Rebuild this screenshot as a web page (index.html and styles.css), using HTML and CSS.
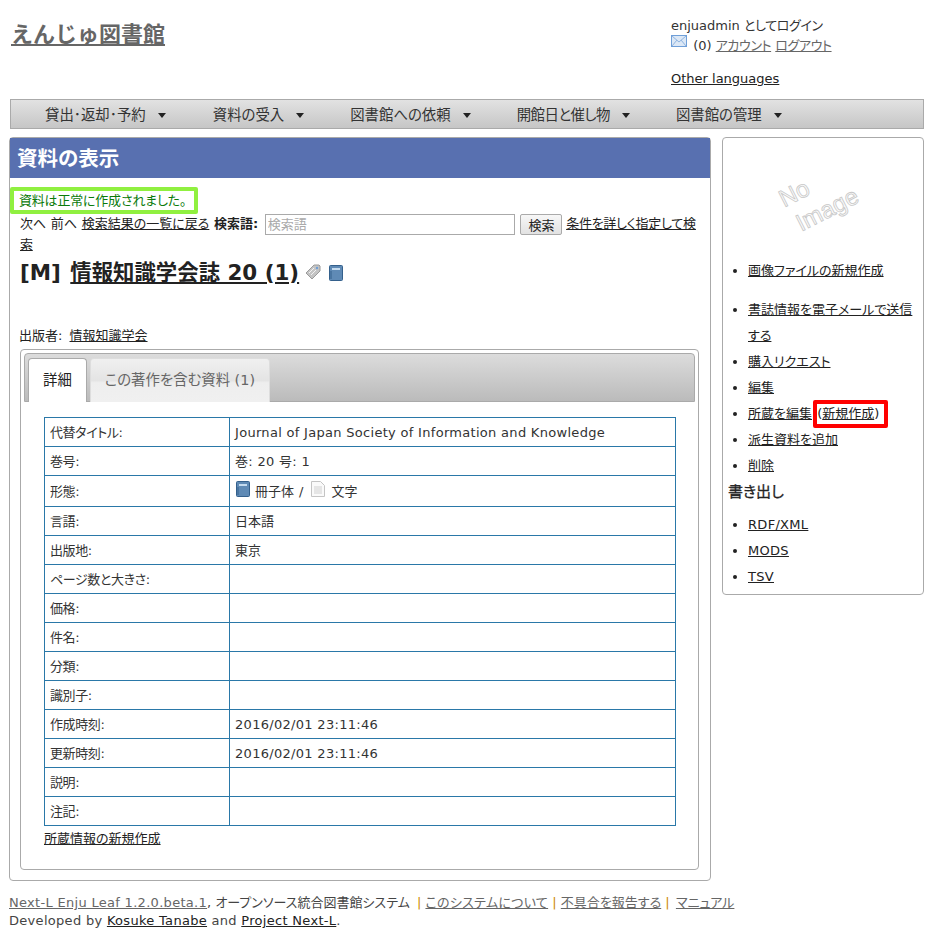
FILE: index.html
```html
<!doctype html>
<html lang="ja">
<head>
<meta charset="utf-8" />
<meta name="viewport" content="width=device-width,initial-scale=1" />
<title>資料の表示 - えんじゅ図書館</title>
<link rel="stylesheet" href="styles.css">
</head>
<body>

<div class="header">
  <h1 class="logo"><a href="#">えんじゅ図書館</a></h1>
  <div class="login">
    <div>enjuadmin <span class="tight">としてログイン</span></div>
    <div class="login-links">
      <svg class="mail" width="16" height="12" viewBox="0 0 16 12"><rect x=".5" y=".5" width="15" height="11" fill="#dce8f6" stroke="#6f9fd8"/><path d="M1 1l7 6 7-6M1 11l5-6M15 11l-5-6" fill="none" stroke="#8fb4e0"/></svg>
      <span>(0)</span> <a class="grey tight" href="#">アカウント</a> <a class="grey tight" href="#">ログアウト</a>
    </div>
    <div class="other"><a href="#">Other languages</a></div>
  </div>
</div>

<ul class="nav">
  <li>貸出･返却･予約<i class="caret"></i></li>
  <li>資料の受入<i class="caret"></i></li>
  <li>図書館への依頼<i class="caret"></i></li>
  <li class="narrow">開館日と催し物<i class="caret"></i></li>
  <li>図書館の管理<i class="caret"></i></li>
</ul>

<div class="columns">
  <div class="main card">
    <h2 class="page-title">資料の表示</h2>
    <div class="content">
      <div class="notice">資料は正常に作成されました。</div>
      <div class="search-line">
        次へ 前へ <a href="#">検索結果の一覧に戻る</a> <b>検索語:</b>
        <input class="query" placeholder="検索語">
        <button class="go">検索</button>
        <a class="adv" href="#">条件を詳しく指定して検索</a>
      </div>
      <div class="title-line">
        <span class="title-text">[M] <a href="#">情報知識学会誌 20 (1)</a></span>
        <svg class="tag" width="16" height="16" viewBox="0 0 16 16"><path d="M1 9l8-8h5l1 1v5l-8 8z" fill="#c4c4c4" stroke="#9a9a9a"/><path d="M4 9l5-5M6 11l5-5" stroke="#f2f2f2"/><circle cx="12" cy="4" r="1.2" fill="#6f9fd8"/></svg>
        <svg class="book after-tag" width="14" height="16" viewBox="0 0 14 16"><rect x=".5" y=".5" width="13" height="15" rx="1" fill="#5f8ab5" stroke="#34608c"/><rect x="3" y="3" width="8" height="2" fill="#c4dbef"/><path d="M2 6v8" stroke="#34608c"/></svg>
      </div>
      <div class="publisher">出版者: <a href="#">情報知識学会</a></div>

      <div class="panel">
        <div class="tabs">
          <a class="tab active" href="#">詳細</a>
          <a class="tab" href="#">この著作を含む資料 (1)</a>
        </div>
        <table class="info">
          <tr><td>代替タイトル:</td><td class="wide">Journal of Japan Society of Information and Knowledge</td></tr>
          <tr><td>巻号:</td><td class="wide">巻: 20 号: 1</td></tr>
          <tr class="form-row"><td>形態:</td><td>
            <div class="form-cell">
              <svg class="book" width="14" height="16" viewBox="0 0 14 16"><rect x=".5" y=".5" width="13" height="15" rx="1" fill="#5f8ab5" stroke="#34608c"/><rect x="3" y="3" width="8" height="2" fill="#c4dbef"/><path d="M2 6v8" stroke="#34608c"/></svg>
              <span>冊子体</span><span>/</span>
              <svg class="book doc" width="14" height="16" viewBox="0 0 14 16"><path d="M.5.5h9l4 4v11H.5z" fill="#fafafa" stroke="#c4c4c4"/><path d="M3 6h8M3 8h8M3 10h8M3 12h8" stroke="#d0d0d0"/></svg>
              <span>文字</span>
            </div></td></tr>
          <tr><td>言語:</td><td>日本語</td></tr>
          <tr><td>出版地:</td><td>東京</td></tr>
          <tr><td>ページ数と大きさ:</td><td></td></tr>
          <tr><td>価格:</td><td></td></tr>
          <tr><td>件名:</td><td></td></tr>
          <tr><td>分類:</td><td></td></tr>
          <tr><td>識別子:</td><td></td></tr>
          <tr><td>作成時刻:</td><td class="wide">2016/02/01 23:11:46</td></tr>
          <tr><td>更新時刻:</td><td class="wide">2016/02/01 23:11:46</td></tr>
          <tr><td>説明:</td><td></td></tr>
          <tr><td>注記:</td><td></td></tr>
        </table>
        <div class="new-item"><a href="#">所蔵情報の新規作成</a></div>
      </div>
    </div>
  </div>

  <div class="side card">
    <svg class="noimage" width="190" height="107" viewBox="0 0 190 107">
      <text x="67" y="57" transform="rotate(-27 67 57)" text-anchor="middle" dominant-baseline="middle">No</text>
      <text x="100" y="73" transform="rotate(-27 100 73)" text-anchor="middle" dominant-baseline="middle">Image</text>
    </svg>
    <ul class="first-list">
      <li><a href="#">画像ファイルの新規作成</a></li>
    </ul>
    <ul>
      <li><a href="#">書誌情報を電子メールで送信する</a></li>
      <li><a href="#">購入リクエスト</a></li>
      <li><a href="#">編集</a></li>
      <li><a href="#">所蔵を編集</a> <span class="marked">(<a href="#">新規作成</a>)</span></li>
      <li><a href="#">派生資料を追加</a></li>
      <li><a href="#">削除</a></li>
    </ul>
    <h3>書き出し</h3>
    <ul class="wide">
      <li><a href="#">RDF/XML</a></li>
      <li><a href="#">MODS</a></li>
      <li><a href="#">TSV</a></li>
    </ul>
  </div>
</div>

<div class="footer">
  <div><a class="grey wide" href="#">Next-L Enju Leaf 1.2.0.beta.1</a>, オープンソース統合図書館システム <span class="sep first">|</span> <a class="grey wide" href="#">このシステムについて</a> <span class="sep">|</span> <a class="grey" href="#">不具合を報告する</a> <span class="sep last">|</span> <a class="grey" href="#">マニュアル</a></div>
  <div class="wide">Developed by <a href="#">Kosuke Tanabe</a> and <a href="#">Project Next-L</a>.</div>
</div>

</body>
</html>
```

FILE: styles.css
```css
body{margin:0;width:947px;font-family:"DejaVu Sans","Noto Sans CJK JP",sans-serif;font-size:13px;line-height:18px;color:#222;background:#fff;font-feature-settings:"palt"}
a{color:#222;text-decoration:underline}
a.grey{color:#666}
.wide{letter-spacing:.3px}
.tight{letter-spacing:-.4px}

.header{display:flex;justify-content:space-between;height:99px;padding:0 23px 0 11px;box-sizing:border-box}
.logo{margin:19px 0 0;font-size:22px;line-height:32px;font-weight:bold;font-feature-settings:normal}
.logo a{color:#666}
.login{width:253px;padding-top:17px;color:#333}
.login-links{height:26px}
.mail{vertical-align:3px;margin-right:2px}
.other{margin-top:9px}

.nav{display:flex;gap:46px;list-style:none;margin:0 23px 0 10px;padding:0 0 0 34px;height:30px;box-sizing:border-box;border:1px solid #aaa;background:linear-gradient(#e2e2e2,#c6c6c6);line-height:30px;color:#333;font-size:14.4px}
.nav li{white-space:nowrap}
.nav li:first-child{margin-right:1px}
.nav .narrow{letter-spacing:-.5px}
.caret{display:inline-block;margin-left:12px;vertical-align:2px;border:4px solid transparent;border-top:5px solid #222;border-bottom:0}

.columns{display:flex;align-items:flex-start;margin:8px 23px 0 9px;gap:11px}
.card{box-sizing:border-box;background:#fff;border:1px solid #aaa;border-radius:4px}
.main{width:702px;height:744px}
.side{width:202px;height:458px;padding:0 5px}

.page-title{margin:0;height:40px;background:#5870b0;color:#fff;font-size:20.5px;line-height:42px;padding-left:7px;font-weight:bold}
.content{padding:9px 9px 0 9px}
.notice{box-sizing:border-box;width:188px;height:27px;border:4px solid #90f040;border-radius:2px;padding:0 0 0 5px;line-height:19px;color:#0a7a0a;margin-left:-9px;white-space:nowrap;letter-spacing:-.2px}
.search-line{line-height:20px;margin-left:1px;height:41px;word-spacing:.5px}
.search-line b{font-weight:bold}
.query{width:250px;height:21px;box-sizing:border-box;border:1px solid #aaa;padding:0 2px;font:13px "DejaVu Sans","Noto Sans CJK JP",sans-serif;vertical-align:middle;margin-left:2px}
.query::placeholder{color:#aaa}
.go{height:21px;width:42px;padding:0;border:1px solid #aaa;border-radius:2px;background:linear-gradient(#f7f7f7,#e2e2e2);font:13px "DejaVu Sans","Noto Sans CJK JP",sans-serif;color:#222;vertical-align:middle;margin-left:1px;margin-right:-1px}
.adv{letter-spacing:-.25px}
.title-line{height:68px;margin-left:1px;line-height:36px;white-space:nowrap}
.title-text{font-size:21.4px;font-weight:bold}
.title-text a{font-weight:bold;margin-left:2px}
.tag{margin-left:2px}
.book{vertical-align:-1px}
.after-tag{margin-left:4px}
.publisher{height:26px;line-height:26px;word-spacing:3px}

.panel{box-sizing:border-box;width:679px;height:521px;margin-left:1px;border:1px solid #aaa;border-radius:4px;padding:3px 3px 0 3px}
.tabs{display:flex;gap:3px;height:49px;box-sizing:border-box;border:1px solid #aaa;border-radius:4px 4px 0 0;background:linear-gradient(#dcdcdc,#bbb);padding:4px 0 0 3px}
.tab{display:block;height:44px;box-sizing:border-box;padding:12px 14px 0;border:1px solid #ddd;border-bottom:0;border-radius:4px 4px 0 0;background:linear-gradient(#f0f0f0,#e4e4e4 50%,#eee 55%,#f0f0f0);color:#666;text-decoration:none;font-size:14.4px}
.tab.active{background:#fff;color:#222;border-color:#aaa}

.info{border-collapse:collapse;width:632px;margin:15px 0 0 20px;table-layout:fixed}
.info td{border:1px solid #2a78a8;height:29px;padding:1px 5px 0;box-sizing:border-box;font-size:13px;line-height:18px;color:#333}
.info td:first-child{width:185px;letter-spacing:-.4px}
.info .form-row td{height:31px}
.form-cell{display:flex;align-items:center;gap:5px;padding-left:1px}
.form-cell .book{align-self:flex-start;margin-top:-2px}
.form-cell .doc{margin-left:3px;margin-right:1px}
.new-item{margin:4px 0 0 20px}

.noimage{display:block}
.noimage text{fill:#fafafa;stroke:#c8c8c8;stroke-width:.8px;font:24px "Liberation Sans",sans-serif}
.side ul{margin:0;padding:0 0 0 20px;list-style:disc}
.side li{line-height:26px}
.first-list{margin-bottom:13px!important;padding-top:13px!important}
.side h3{margin:0 0 7px;font-size:15px;line-height:26px;font-weight:normal;-webkit-text-stroke:.3px #222}
.marked{display:inline-block;box-sizing:border-box;width:75px;height:28px;margin:-3px 0 -3px -3px;border:4px solid #f00;border-radius:2px;line-height:20px;white-space:nowrap}

.footer{margin:13px 0 0 9px;line-height:18px;color:#444}
.sep{color:#c80}
.sep.first{margin-left:3px}
.sep.last{margin-right:2px}
```
